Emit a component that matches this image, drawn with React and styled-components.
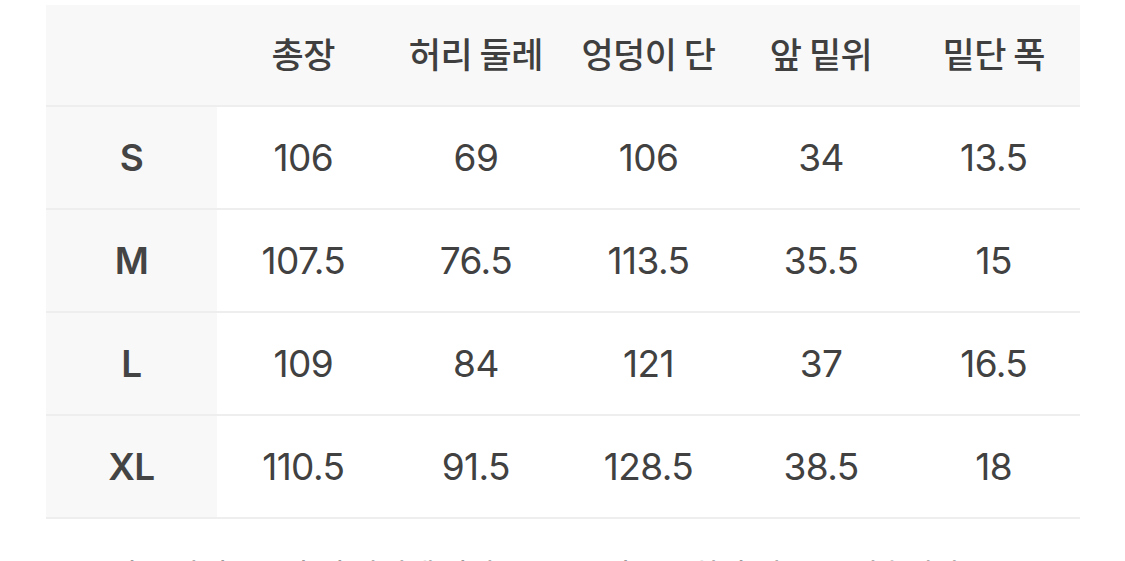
import React from 'react';
import styled, { createGlobalStyle } from 'styled-components';

const GlobalStyle = createGlobalStyle`
  html, body {
    margin: 0;
    padding: 0;
    background: #ffffff;
    overflow: hidden;
  }
  body {
    font-family: Inter, "Noto Sans CJK KR", "Noto Sans", sans-serif;
    color: #3d3d3d;
  }
`;

const Page = styled.div`
  width: 1125px;
  height: 561px;
  padding: 5px 45px 0 46px;
  box-sizing: border-box;
  overflow: hidden;
`;

const Table = styled.div`
  display: grid;
  grid-template-columns: 171px repeat(5, 1fr);
  width: 1034px;
`;

const HeadCell = styled.div`
  height: 94px;
  padding-bottom: 6px;
  background: #f8f8f8;
  border-bottom: 2px solid #eeeeee;
  display: flex;
  align-items: center;
  justify-content: center;
  font-family: "Noto Sans CJK KR", Inter, sans-serif;
  font-size: 35px;
  font-weight: 500;
  color: #3f3f3f;
  letter-spacing: -0.5px;
  white-space: nowrap;
`;

const Cell = styled.div`
  height: 101px;
  border-bottom: 2px solid #eeeeee;
  display: flex;
  align-items: center;
  justify-content: center;
  background: ${({ $label }) => ($label ? '#f8f8f8' : '#ffffff')};
  font-family: Inter, "Noto Sans", sans-serif;
  font-size: 37px;
  font-weight: ${({ $label }) => ($label ? 600 : 400)};
  color: ${({ $label }) => ($label ? '#444444' : '#414141')};
  letter-spacing: -0.6px;
`;

const Note = styled.p`
  margin: 34px 0 0 44px;
  font-family: "Noto Sans CJK KR", sans-serif;
  font-size: 30px;
  line-height: 1.3;
  color: #9a9a9a;
  white-space: nowrap;
`;

const headers = ['', '총장', '허리 둘레', '엉덩이 단', '앞 밑위', '밑단 폭'];

const rows = [
  ['S', '106', '69', '106', '34', '13.5'],
  ['M', '107.5', '76.5', '113.5', '35.5', '15'],
  ['L', '109', '84', '121', '37', '16.5'],
  ['XL', '110.5', '91.5', '128.5', '38.5', '18'],
];

const App = () => (
  <>
    <GlobalStyle />
    <Page>
      <Table>
        {headers.map((h, i) => (
          <HeadCell key={`h${i}`}>{h}</HeadCell>
        ))}
        {rows.map((row) =>
          row.map((v, i) => (
            <Cell key={`${row[0]}-${i}`} $label={i === 0}>
              {v}
            </Cell>
          ))
        )}
      </Table>
      <Note>* 상품 사이즈는 측정 방법에 따라 1~3cm 정도 오차가 있을 수 있습니다.</Note>
    </Page>
  </>
);

export default App;
